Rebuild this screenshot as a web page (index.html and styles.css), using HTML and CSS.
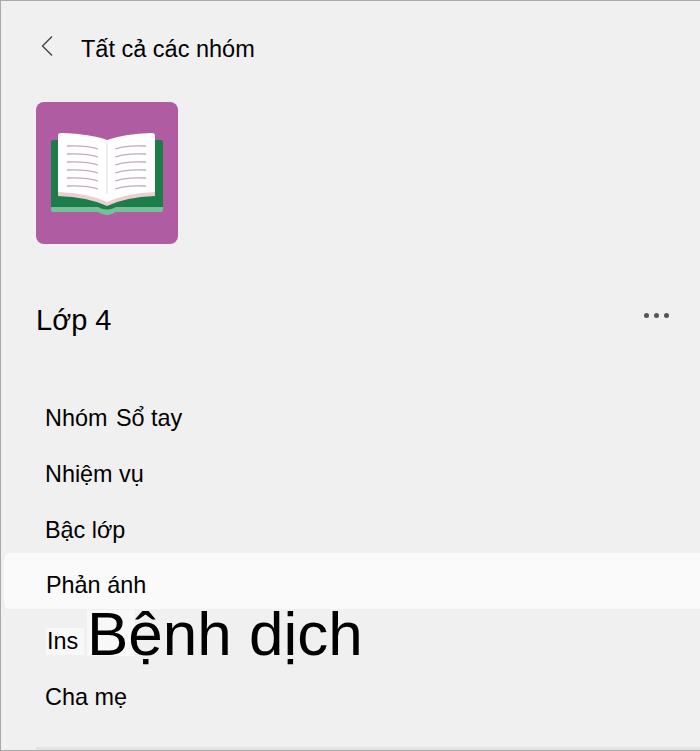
FILE: index.html
```html
<!DOCTYPE html>
<html lang="vi">
<head>
    <meta charset="UTF-8">
    <meta name="viewport" content="width=device-width, initial-scale=1.0">
    <title>Lớp 4</title>
    <link rel="stylesheet" href="styles.css">
</head>
<body>
    <div class="panel">
        <div class="back-row">
            <svg class="back-icon" width="14" height="22" viewBox="0 0 14 22">
                <path d="M12 1.5 L2.5 11 L12 20.5" fill="none" stroke="#444" stroke-width="1.4"/>
            </svg>
            <span class="back-title">Tất cả các nhóm</span>
        </div>

        <div class="team-tile">
            <svg width="142" height="142" viewBox="0 0 142 142">
                <defs>
                    <filter id="soft"><feGaussianBlur stdDeviation="0.7"/></filter>
                </defs>
                <g filter="url(#soft)">
                    <path d="M15 105 H127 V108 Q127 110 125 110 H80 Q71 116 62 110 H17 Q15 110 15 108 Z" fill="#74c096"/>
                    <path d="M15 40 Q15 38 17 38 H125 Q127 38 127 40 V105 H80 Q71 110 62 105 H15 Z" fill="#1e7d4c"/>
                    <path d="M22 34 Q22 31 25 31 Q55 32 71 38 Q87 32 116 31 Q119 31 119 34 V93 Q90 94 71 103 Q52 94 22 93 Z" fill="#fff"/>
                    <path d="M22 90 Q52 91 71 100 Q90 91 119 90 V94 Q90 95 71 104 Q52 95 22 94 Z" fill="#eccfcf"/>
                    <path d="M71 40 V92" stroke="#d8d2da" stroke-width="0.8" fill="none"/>
                    <g fill="none" stroke="#c2a8c0" stroke-width="1.3">
                        <path d="M31 44 Q50 43 62 47"/>
                        <path d="M31 52 Q50 51 62 55"/>
                        <path d="M31 60 Q50 59 62 63"/>
                        <path d="M31 68 Q50 67 62 71"/>
                        <path d="M31 76 Q50 75 62 79"/>
                        <path d="M31 84 Q50 83 62 87"/>
                        <path d="M110 44 Q91 43 79 47"/>
                        <path d="M110 52 Q91 51 79 55"/>
                        <path d="M110 60 Q91 59 79 63"/>
                        <path d="M110 68 Q91 67 79 71"/>
                        <path d="M110 76 Q91 75 79 79"/>
                        <path d="M110 84 Q91 83 79 87"/>
                    </g>
                </g>
            </svg>
        </div>

        <div class="team-row">
            <span class="team-name">Lớp 4</span>
            <div class="more-dots"><span></span><span></span><span></span></div>
        </div>

        <ul class="nav-list">
            <li><a href="#"><span class="first-word">Nhóm</span> Sổ tay</a></li>
            <li><a href="#">Nhiệm vụ</a></li>
            <li><a href="#">Bậc lớp</a></li>
            <li class="active"><a href="#">Phản ánh</a></li>
            <li><a href="#" class="ins-link">Ins</a><span class="translate-label">Bệnh dịch</span></li>
            <li><a href="#">Cha mẹ</a></li>
        </ul>

        <div class="panel-end"></div>
    </div>
</body>
</html>
```

FILE: styles.css
```css
/* Reset styles */
* {
    margin: 0;
    padding: 0;
    box-sizing: border-box;
}

body {
    font-family: "Liberation Sans", Arial, sans-serif;
    background-color: #f0f0f0;
    color: #000;
}

.panel {
    display: flex;
    flex-direction: column;
    width: 700px;
    height: 751px;
    padding-top: 1px;
    overflow: hidden;
    border-top: 1px solid #a9a9a9;
    border-left: 1px solid #a9a9a9;
    border-bottom: 1px solid #a9a9a9;
}

.panel-end {
    flex-shrink: 0;
    height: 3px;
    margin: auto 0 0 35px;
    background-color: #e4e4e4;
}

/* Back link */
.back-row {
    display: flex;
    flex-shrink: 0;
    align-items: center;
    height: 94px;
    padding: 0 0 0 39px;
}

.back-icon {
    margin-right: 27px;
    margin-top: -6px;
}

.back-title {
    font-size: 23.5px;
}

/* Team tile */
.team-tile {
    flex-shrink: 0;
    width: 142px;
    height: 142px;
    margin: 6px 0 0 35px;
    background-color: #b05ca3;
    border-radius: 8px;
}

/* Team name */
.team-row {
    display: flex;
    flex-shrink: 0;
    justify-content: space-between;
    align-items: center;
    height: 44px;
    margin-top: 54px;
    padding: 0 31px 0 35px;
}

.team-name {
    font-size: 29px;
}

.more-dots {
    display: flex;
    gap: 5px;
    margin-top: -9px;
}

.more-dots span {
    width: 5px;
    height: 5px;
    border-radius: 50%;
    background-color: #555;
}

/* Channel list */
.nav-list {
    list-style: none;
    margin-top: 49px;
}

.nav-list li {
    position: relative;
    display: flex;
    align-items: center;
    height: 55.7px;
    margin-left: 3px;
    padding-left: 41px;
    font-size: 23.4px;
}

.nav-list a {
    color: #000;
    text-decoration: none;
}

.first-word {
    margin-right: 2px;
}

.nav-list li.active {
    margin-top: -5px;
    margin-bottom: 5px;
    padding-top: 10px;
    padding-left: 42px;
    background-color: #fafafa;
    border-radius: 6px 0 0 6px;
}

.nav-list .ins-link {
    margin-left: 1px;
    padding: 0 6px 0 1px;
    background-color: #f8f8f8;
}

.translate-label {
    position: absolute;
    left: 83px;
    top: -15px;
    font-size: 62px;
    line-height: 70px;
    background: linear-gradient(#f8f8f8, #f8f8f8) no-repeat 0 11px / 48px 46px;
}
```
